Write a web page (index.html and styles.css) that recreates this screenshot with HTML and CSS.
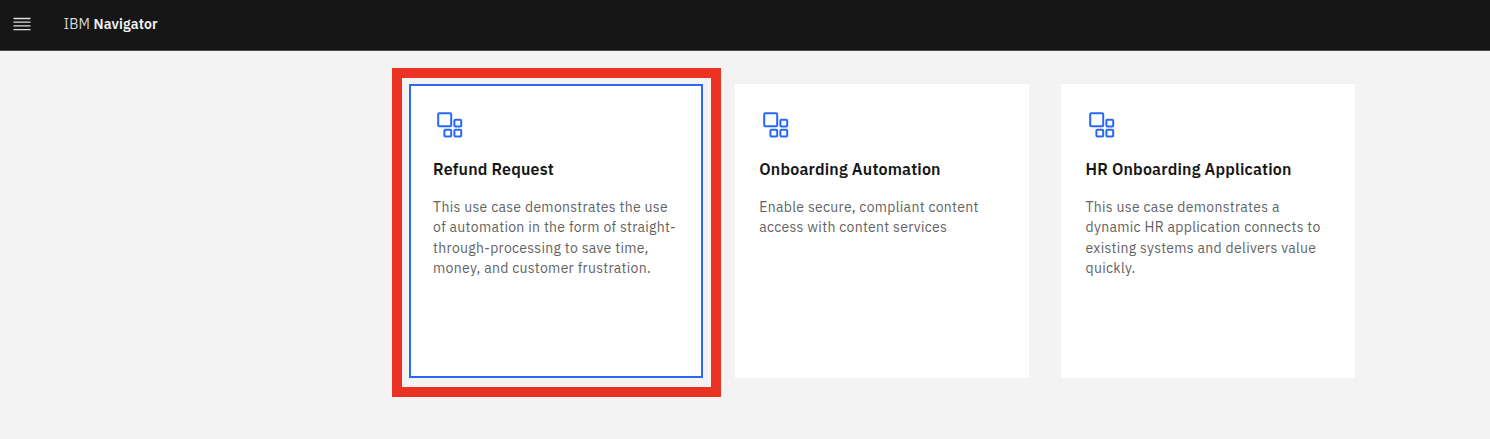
FILE: index.html
```html
<!DOCTYPE html>
<html lang="en">
<head>
<meta charset="utf-8">
<title>IBM Navigator</title>
<link rel="stylesheet" href="styles.css">
</head>
<body>
<svg class="defs" aria-hidden="true">
  <symbol id="app-icon" viewBox="0 0 32 32">
    <rect x="5.2" y="5.3" width="13" height="13" rx="1"/>
    <rect x="21.4" y="11.7" width="6.8" height="6.8" rx="1"/>
    <rect x="11.4" y="21.7" width="6.8" height="6.8" rx="1"/>
    <rect x="21.4" y="21.7" width="6.8" height="6.8" rx="1"/>
  </symbol>
</svg>
<header class="header">
  <svg class="menu" viewBox="0 0 18 14"><path d="M0.5 1.5h17M0.5 5.2h17M0.5 8.9h17M0.5 12.6h17"/></svg>
  <div class="brand"><span class="brand-prefix">IBM</span> <strong>Navigator</strong></div>
</header>
<main class="cards">
  <article class="card card-selected">
    <svg class="icon"><use href="#app-icon"/></svg>
    <h2 class="title">Refund Request</h2>
    <p class="text">This use case demonstrates the use<br>of automation in the form of straight-<br>through-processing to save time,<br>money, and customer frustration.</p>
    <div class="highlight"></div>
  </article>
  <article class="card">
    <svg class="icon"><use href="#app-icon"/></svg>
    <h2 class="title">Onboarding Automation</h2>
    <p class="text">Enable secure, compliant content<br>access with content services</p>
  </article>
  <article class="card">
    <svg class="icon"><use href="#app-icon"/></svg>
    <h2 class="title">HR Onboarding Application</h2>
    <p class="text">This use case demonstrates a<br>dynamic HR application connects to<br>existing systems and delivers value<br>quickly.</p>
  </article>
</main>
</body>
</html>
```
FILE: styles.css
```css
* { box-sizing: border-box; }
body {
  margin: 0;
  height: 439px;
  overflow: hidden;
  background: #f3f3f3;
  color: #161616;
  font-family: "IBM Plex Sans", Roboto, "Liberation Sans", sans-serif;
}
.defs { display: block; width: 0; height: 0; }
.header {
  display: flex;
  align-items: center;
  height: 51px;
  padding: 0 0 2px 13px;
  background: #161616;
  border-bottom: 1px solid #4a4a4a;
  color: #f4f4f4;
}
.menu { width: 18px; height: 14px; fill: none; stroke: #dedede; stroke-width: 1.3; }
.brand { margin-left: 32.6px; font-size: 14px; line-height: 20px; letter-spacing: 0.14px; white-space: nowrap; }
.brand-prefix { color: #d8d8d8; }
.brand strong { font-weight: 600; }
.cards {
  display: grid;
  grid-template-columns: repeat(3, 294px);
  gap: 32.2px;
  padding: 33px 0 0 408.6px;
}
.card { position: relative; height: 294px; padding: 24px 24.5px; background: #fff; }
.card-selected { box-shadow: inset 0 0 0 2px #2d68f5; }
.icon { display: block; width: 32px; height: 32px; fill: none; stroke: #2868f6; stroke-width: 2; }
.title { margin: 17px 0 0; font-size: 16px; font-weight: 600; line-height: 24px; letter-spacing: 0.19px; white-space: nowrap; }
.text { margin: 16px 0 0; color: #636363; font-size: 14px; line-height: 20.25px; letter-spacing: 0.3px; white-space: nowrap; }
.highlight { position: absolute; inset: -16px -18.4px -19px -16.6px; border: 10px solid #ea3323; }
```
